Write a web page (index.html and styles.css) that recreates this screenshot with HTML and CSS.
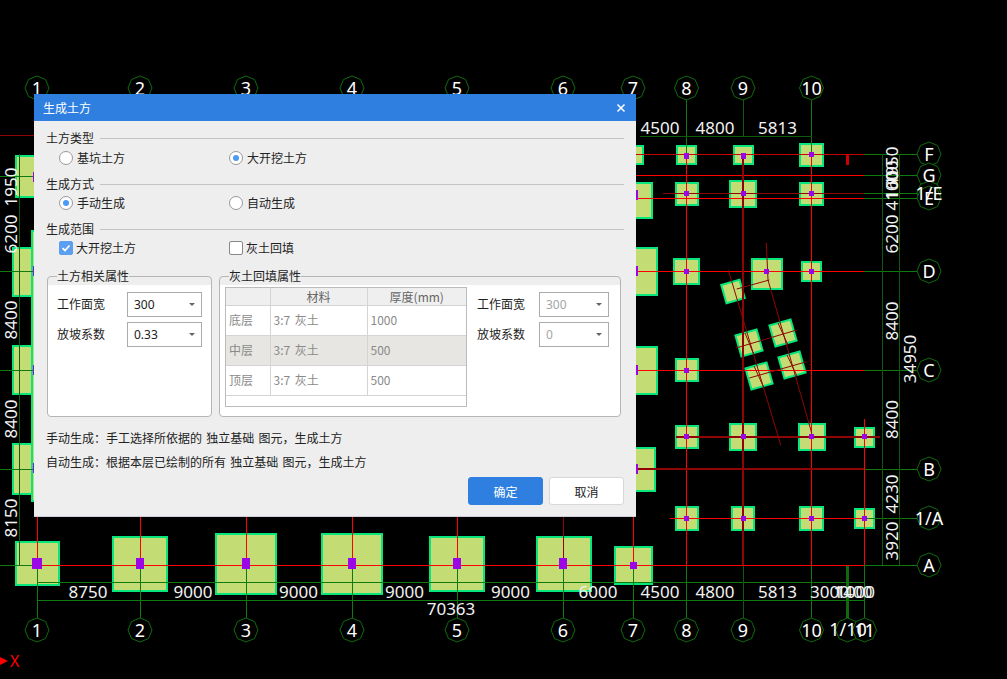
FILE: index.html
```html
<!DOCTYPE html>
<html lang="zh-CN">
<head>
<meta charset="utf-8">
<title>生成土方</title>
<link rel="stylesheet" href="styles.css">
</head>
<body>
<svg class="cad" width="1007" height="679" viewBox="0 0 1007 679">
  <defs>
    <polygon id="bub" points="0,-12 8.500,-8.500 12,0 8.500,8.500 0,12 -8.500,8.500 -12,0 -8.500,-8.500"/>
  </defs>

  <!-- footings -->
  <g class="ft">
    <rect x="16" y="156" width="30" height="41"/><rect x="13" y="248" width="30" height="48"/><rect x="13" y="346" width="30" height="48"/><rect x="13" y="444" width="30" height="50"/>
    <rect x="32" y="231" width="6" height="270"/>
    <rect x="620" y="146" width="23" height="18"/><rect x="620" y="183" width="32" height="35"/><rect x="620" y="248" width="37" height="47"/><rect x="620" y="347" width="37" height="47"/><rect x="620" y="448" width="35" height="43"/>
    <rect x="677" y="146" width="19" height="18"/><rect x="676" y="183" width="22" height="22"/><rect x="674" y="259" width="25" height="25"/><rect x="676" y="359" width="22" height="22"/><rect x="676" y="426" width="22" height="22"/><rect x="676" y="507" width="22" height="23"/>
    <rect x="734" y="146" width="19" height="18"/><rect x="730" y="181" width="26" height="26"/><rect x="752" y="259" width="30" height="30"/><rect x="730" y="424" width="26" height="26"/><rect x="732" y="507" width="22" height="23"/>
    <rect x="800" y="144" width="23" height="22"/><rect x="800" y="183" width="23" height="22"/><rect x="802" y="262" width="19" height="19"/><rect x="799" y="424" width="26" height="26"/><rect x="800" y="507" width="23" height="23"/>
    <rect x="855" y="428" width="19" height="19"/><rect x="855" y="509" width="19" height="19"/>
    <rect x="16" y="542" width="43" height="43"/><rect x="113" y="537" width="54" height="54"/><rect x="216" y="534" width="60" height="60"/><rect x="322" y="534" width="60" height="60"/><rect x="430" y="537" width="54" height="54"/><rect x="537" y="537" width="54" height="54"/><rect x="615" y="547" width="37" height="37"/>
    <rect x="723.500" y="282" width="19" height="19" transform="rotate(-16 733 291.500)"/>
    <rect x="738" y="332" width="22" height="22" transform="rotate(-16 749 343)"/>
    <rect x="772" y="322" width="22" height="22" transform="rotate(-16 783 333)"/>
    <rect x="748" y="365" width="22" height="22" transform="rotate(-16 759 376)"/>
    <rect x="781" y="354" width="22" height="22" transform="rotate(-16 792 365)"/>
  </g>

  <!-- green axis and dimension lines -->
  <g class="gl">
    <path d="M37.500 100V630M140.500 100V618M246.500 100V618M352.500 100V618M457.500 100V618M563.500 100V618M633.500 100V618M686.500 100V618M811.500 100V618M864.500 565V618"/>
    <path d="M0 176.500H37M0 271.500H37M0 370.500H37M0 469.500H37M0 565.500H37"/>
    <path d="M864 154.500H917M864 175.500H917M864 193.500H917M864 198.500H917M864 271.500H917M864 370.500H917M864 469.500H917M864 518.500H917M864 565.500H917"/>
    <path d="M37 582.500H864M37 600.500H864"/>
    <path class="gd" d="M19 154V565M882.500 154V565M899.500 154V565"/>
    <path class="gd" d="M640 136.500H811.500M743 100V136M743 565V618"/>
    <path class="gt" d="M847.500 565V620"/>
  </g>

  <!-- red axes -->
  <g class="rl">
    <path d="M37.500 517V565M140.500 517V565M246.500 517V565M352.500 517V565M457.500 517V565M633.500 517V565"/>
    <path d="M636 175.500H864M636 198.500H864M636 271.500H864M636 370.500H864M670 518.500H864M37 565.500H864M686.500 154V565M811.500 154V565M864.500 419V565"/>
    <path class="rm" d="M636 154.500H864"/>
    <path class="rd" d="M563.500 517V565M0 135.500H34"/>
    <path class="rx" d="M743 154V565M636 469H864M676 436.500H880"/>
    <path class="rd" d="M663 193.500H864"/>
    <path class="rt" d="M847.500 154V165"/>
    <path class="rs" d="M728.300 270L780.700 445M766.300 242.700L768 280L811.700 433M736.700 289L769.300 280M736 348L796.700 330M749.300 378L806.700 361.700M745 333L754 355M778 323L788 345M754 366L764 388M787 355L797 376"/>
  </g>

  <!-- column markers -->
  <g class="pu">
    <rect x="33" y="172" width="2" height="10"/><rect x="33" y="266" width="2" height="10"/><rect x="33" y="365" width="2" height="10"/><rect x="33" y="463" width="2" height="10"/>
    <rect x="636" y="190" width="2" height="10"/><rect x="636" y="266" width="2" height="10"/><rect x="636" y="365" width="2" height="10"/><rect x="636" y="464" width="2" height="10"/>
    <rect x="684" y="153" width="5" height="6"/><rect x="741" y="153" width="5" height="6"/><rect x="809" y="152" width="5" height="5"/>
    <rect x="684" y="191" width="5" height="5"/><rect x="741" y="191" width="5" height="5"/><rect x="809" y="191" width="5" height="5"/>
    <rect x="684" y="269" width="5" height="5"/><rect x="764" y="269" width="5" height="5"/><rect x="809" y="269" width="5" height="5"/>
    <rect x="684" y="368" width="5" height="5"/>
    <rect x="684" y="434" width="5" height="5"/><rect x="741" y="434" width="5" height="5"/><rect x="809" y="434" width="5" height="5"/><rect x="862" y="434" width="5" height="5"/>
    <rect x="684" y="516" width="5" height="5"/><rect x="741" y="516" width="5" height="5"/><rect x="809" y="516" width="5" height="5"/><rect x="862" y="516" width="5" height="5"/>
    <rect x="32" y="558" width="10" height="11"/><rect x="136" y="558" width="8" height="11"/><rect x="242" y="558" width="8" height="11"/><rect x="348" y="558" width="8" height="11"/><rect x="453" y="558" width="8" height="11"/><rect x="559" y="558" width="8" height="11"/><rect x="630" y="562" width="7" height="7"/>
  </g>

  <!-- axis bubbles -->
  <g class="bb">
    <use href="#bub" x="37" y="88"/><use href="#bub" x="140" y="88"/><use href="#bub" x="246" y="88"/><use href="#bub" x="352" y="88"/><use href="#bub" x="457" y="88"/><use href="#bub" x="563" y="88"/><use href="#bub" x="633" y="88"/><use href="#bub" x="686.500" y="88"/><use href="#bub" x="743" y="88"/><use href="#bub" x="811.500" y="88"/>
    <use href="#bub" x="37" y="630"/><use href="#bub" x="140" y="630"/><use href="#bub" x="246" y="630"/><use href="#bub" x="352" y="630"/><use href="#bub" x="457" y="630"/><use href="#bub" x="563" y="630"/><use href="#bub" x="633" y="630"/><use href="#bub" x="686.500" y="630"/><use href="#bub" x="743" y="630"/><use href="#bub" x="811.500" y="630"/><use href="#bub" x="847.500" y="630"/><use href="#bub" x="864.500" y="630"/>
    <use href="#bub" x="929" y="154"/><use href="#bub" x="929" y="175"/><use href="#bub" x="929" y="193"/><use href="#bub" x="929" y="198"/><use href="#bub" x="929" y="271"/><use href="#bub" x="929" y="370"/><use href="#bub" x="929" y="469"/><use href="#bub" x="929" y="518"/><use href="#bub" x="929" y="565"/>
  </g>

  <g class="ax">
    <text x="37" y="94.500">1</text><text x="140" y="94.500">2</text><text x="246" y="94.500">3</text><text x="352" y="94.500">4</text><text x="457" y="94.500">5</text><text x="563" y="94.500">6</text><text x="633" y="94.500">7</text><text x="686.500" y="94.500">8</text><text x="743" y="94.500">9</text><text x="811.500" y="94.500">10</text>
    <text x="37" y="636.500">1</text><text x="140" y="636.500">2</text><text x="246" y="636.500">3</text><text x="352" y="636.500">4</text><text x="457" y="636.500">5</text><text x="563" y="636.500">6</text><text x="633" y="636.500">7</text><text x="686.500" y="636.500">8</text><text x="743" y="636.500">9</text><text x="811.500" y="636.500">10</text><text x="848" y="636">1/10</text><text x="864.500" y="636.500">11</text>
    <text x="929" y="160.500">F</text><text x="929" y="181.500">G</text><text x="929" y="199.500">1/E</text><text x="929" y="204.500">E</text><text x="929" y="277.500">D</text><text x="929" y="376.500">C</text><text x="929" y="475.500">B</text><text x="929" y="524.500">1/A</text><text x="929" y="571.500">A</text>
  </g>

  <g class="dim">
    <text x="660" y="133.500">4500</text><text x="715" y="133.500">4800</text><text x="777.500" y="133.500">5813</text>
    <text x="88" y="598">8750</text><text x="193" y="598">9000</text><text x="298.500" y="598">9000</text><text x="404.500" y="598">9000</text><text x="510.500" y="598">9000</text><text x="598" y="598">6000</text><text x="660" y="598">4500</text><text x="715" y="598">4800</text><text x="777.500" y="598">5813</text><text x="829.500" y="598">3000</text><text x="853" y="598">1400</text><text x="855.500" y="598">1000</text>
    <text x="451" y="615">70363</text>
    <text transform="translate(16.500 187) rotate(-90)">1950</text><text transform="translate(16.500 234) rotate(-90)">6200</text><text transform="translate(16.500 320) rotate(-90)">8400</text><text transform="translate(16.500 419) rotate(-90)">8400</text><text transform="translate(16.500 518) rotate(-90)">8150</text>
    <text transform="translate(897.500 166) rotate(-90)">1950</text><text transform="translate(897.500 180) rotate(-90)">1600</text><text transform="translate(897.500 191) rotate(-90)">4100</text><text transform="translate(897.500 234) rotate(-90)">6200</text><text transform="translate(897.500 321) rotate(-90)">8400</text><text transform="translate(897.500 419.500) rotate(-90)">8400</text><text transform="translate(897.500 494) rotate(-90)">4230</text><text transform="translate(897.500 541) rotate(-90)">3920</text>
    <text transform="translate(915.500 359) rotate(-90)">34950</text>
  </g>

  <polygon class="xarrow" points="0,657 8,661 0,665"/>
  <text class="xlabel" x="10" y="667">X</text>
</svg>

<section class="dialog">
  <header class="titlebar">
    <span>生成土方</span>
    <svg class="close" width="10" height="10" viewBox="0 0 10 10"><path d="M1.500 1.500L8.500 8.500M8.500 1.500L1.500 8.500"/></svg>
  </header>
  <div class="body">
    <div class="sec-head"><span>土方类型</span><i></i></div>
    <div class="opts first">
      <label class="opt"><b class="radio"></b>基坑土方</label>
      <label class="opt"><b class="radio on"></b>大开挖土方</label>
    </div>
    <div class="sec-head"><span>生成方式</span><i></i></div>
    <div class="opts">
      <label class="opt"><b class="radio on"></b>手动生成</label>
      <label class="opt"><b class="radio"></b>自动生成</label>
    </div>
    <div class="sec-head"><span>生成范围</span><i></i></div>
    <div class="opts">
      <label class="opt chk"><b class="check on"><svg width="14" height="14" viewBox="0 0 14 14"><path d="M3.500 7.200L6 9.500L10.500 4.500"/></svg></b>大开挖土方</label>
      <label class="opt chk"><b class="check"></b>灰土回填</label>
    </div>

    <div class="groups">
      <fieldset class="group left">
        <legend>土方相关属性</legend>
        <div class="field"><span class="flabel">工作面宽</span><div class="select"><span>300</span><i class="caret"></i></div></div>
        <div class="field"><span class="flabel">放坡系数</span><div class="select"><span>0.33</span><i class="caret"></i></div></div>
      </fieldset>
      <fieldset class="group right">
        <legend>灰土回填属性</legend>
        <div class="group-row">
          <div class="tablewrap">
            <table>
              <colgroup><col class="c1"><col class="c2"><col></colgroup>
              <thead><tr><th></th><th>材料</th><th>厚度(mm)</th></tr></thead>
              <tbody>
                <tr><td>底层</td><td>3:7 灰土</td><td>1000</td></tr>
                <tr class="alt"><td>中层</td><td>3:7 灰土</td><td>500</td></tr>
                <tr><td>顶层</td><td>3:7 灰土</td><td>500</td></tr>
              </tbody>
            </table>
          </div>
          <div class="fields">
            <div class="field"><span class="flabel">工作面宽</span><div class="select off"><span>300</span><i class="caret"></i></div></div>
            <div class="field"><span class="flabel">放坡系数</span><div class="select off"><span>0</span><i class="caret"></i></div></div>
          </div>
        </div>
      </fieldset>
    </div>

    <p class="help first">手动生成：手工选择所依据的 独立基础 图元，生成土方</p>
    <p class="help">自动生成：根据本层已绘制的所有 独立基础 图元，生成土方</p>

    <div class="actions">
      <button class="btn primary">确定</button>
      <button class="btn">取消</button>
    </div>
  </div>
</section>
</body>
</html>
```
FILE: styles.css
```css
html, body { margin: 0; padding: 0; height: 100%; background: #000; overflow: hidden; }
body { position: relative; width: 1007px; height: 679px; font-family: "Noto Sans CJK SC", "Noto Sans", sans-serif; font-size: 12px; color: #222; }

/* CAD canvas */
.cad { position: absolute; left: 0; top: 0; display: block; }
.ft rect { fill: #c3dc73; stroke: #06e67c; stroke-width: 2; }
.gl path { fill: none; stroke: #0f7a0f; stroke-width: 1; shape-rendering: crispEdges; }
.gl .gd { stroke: #0b5c0b; stroke-width: 1; }
.gl .gt { stroke: #0f6a0f; stroke-width: 3; }
.rl path { fill: none; stroke: #f00; stroke-width: 1; shape-rendering: crispEdges; }
.rl .rm { stroke: #c40303; }
.rl .rd { stroke: #8f0505; }
.rl .rx { stroke: #8f0505; stroke-width: 2; }
.rl .rt { stroke: #c00; stroke-width: 3; }
.rl .rs { stroke: #8f0505; shape-rendering: auto; }
.pu rect { fill: #9a06e6; }
.bb use { fill: #000; stroke: #0f6a0f; stroke-width: 1; }
.ax text { fill: #fff; font-family: "Noto Sans", sans-serif; font-size: 18px; text-anchor: middle; }
.dim text { fill: #f2f2f2; font-family: "Noto Sans", sans-serif; font-size: 17px; text-anchor: middle; }
.xarrow { fill: #f00; }
.xlabel { fill: #f00; font-family: "Noto Sans", sans-serif; font-size: 16px; }

/* Dialog window */
.dialog { position: absolute; left: 34px; top: 94px; width: 602px; height: 423px; background: #eee; box-shadow: inset 0 -1px 0 #cdd0da; display: flex; flex-direction: column; }
.titlebar { height: 27px; flex: none; background: #2e7fe0; color: #fff; display: flex; align-items: center; justify-content: space-between; padding: 0 10px 0 9px; }
.close path { stroke: #fff; stroke-width: 1.500; fill: none; }
.body { padding: 9px 12px 0; }

.sec-head { display: flex; align-items: center; gap: 6px; height: 16px; line-height: 16px; }
.sec-head i { flex: 1; height: 1px; background: #c4c4c4; }
.opts { display: flex; height: 16px; margin: 3px 0 10px; padding-left: 13px; }
.opts.first { margin-top: 4px; }
.opt { width: 170px; display: flex; align-items: center; gap: 4px; line-height: 16px; }
.opt.chk { gap: 3px; }
.radio { width: 12px; height: 12px; border: 1px solid #999; border-radius: 50%; background: #fff; box-sizing: content-box; display: flex; align-items: center; justify-content: center; }
.radio.on::after { content: ""; width: 6px; height: 6px; border-radius: 50%; background: #4a9bf5; }
.check { width: 12px; height: 12px; border: 1px solid #888; border-radius: 2px; background: #fff; display: block; position: relative; }
.check.on { background: #5b9ff0; border-color: #5b9ff0; }
.check svg { display: block; margin: -1px; }
.check path { fill: none; stroke: #fff; stroke-width: 1.800; }

/* Groups */
.groups { display: flex; gap: 7px; margin: 12px 0 0 1px; }
.group { margin: 0; min-width: 0; box-sizing: border-box; height: 149px; background: linear-gradient(#eee 8px, #fff 8px); border: 1px solid #b5b5b5; border-radius: 4px; }
.group legend { padding: 0; height: 16px; line-height: 16px; }
.group.left { width: 165px; padding: 8px 9px 0; }
.group.right { width: 402px; padding: 3px 0 0 5px; }
.group.right legend { margin-left: 4px; }
.group-row { display: flex; gap: 10px; }
.field { display: flex; align-items: center; height: 25px; margin-bottom: 5px; }
.flabel { width: 70px; flex: none; padding-bottom: 2px; }
.fields { margin-top: 5px; }
.fields .flabel { width: 62px; }
.select { width: 75px; height: 25px; box-sizing: border-box; border: 1px solid #ababab; background: #fff; display: flex; align-items: center; justify-content: space-between; padding: 0 6px; color: #222; font-family: "Noto Sans", sans-serif; }
.select.off { width: 70px; color: #a5a5a5; }
.caret { width: 0; height: 0; border-left: 3px solid transparent; border-right: 3px solid transparent; border-top: 3px solid #666; }

/* Table */
.tablewrap { width: 242px; height: 120px; box-sizing: border-box; border: 1px solid #bcbcbc; background: #fff; flex: none; }
table { width: 240px; border-collapse: collapse; table-layout: fixed; font-size: 12px; }
.c1 { width: 44px; }
.c2 { width: 97px; }
th { height: 17px; padding: 0; font-weight: 400; background: #efefef; color: #666; border: 1px solid #d4d4d4; border-top: 0; line-height: 16px; }
th:first-child, td:first-child { border-left: 0; }
th:last-child, td:last-child { border-right: 0; }
td { height: 30px; padding: 0 3px 1px; box-sizing: border-box; color: #8a8a8a; border: 1px solid #d4d4d4; line-height: 16px; word-spacing: 2px; }
.alt td { background: #e7e6e2; }

/* Help */
.help { margin: 8px 0 0; line-height: 16px; height: 16px; word-spacing: 1.500px; }
.help.first { margin-top: 13px; }

/* Buttons */
.actions { display: flex; justify-content: flex-end; gap: 6px; margin-top: 7px; }
.btn { width: 75px; height: 28px; padding: 0; box-sizing: border-box; border: 1px solid #d8d8d8; border-radius: 3px; background: #fff; color: #222; font: inherit; }
.btn.primary { background: #2e7fe0; border-color: #2e7fe0; color: #fff; }
```
